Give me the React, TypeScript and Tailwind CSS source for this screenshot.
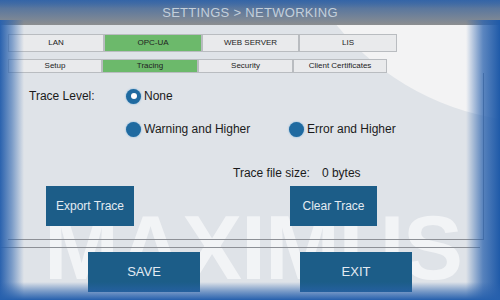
import React from "react";

const Tab = ({ label, active, w, h }: { label: string; active?: boolean; w: string; h: string }) => (
  <div
    className={`${w} ${h} flex items-center justify-center border border-[#b9bcc0] text-[8px] text-[#222] ${
      active ? "bg-[#6cb96b]" : "bg-[#e9eaec]"
    }`}
  >
    {label}
  </div>
);

const Radio = ({ checked, label }: { checked?: boolean; label: string }) => (
  <div className="flex items-center gap-[3px]">
    <div className="w-[15px] h-[15px] rounded-full bg-[#1f6aa0] flex items-center justify-center shadow-[0_0_2px_#6aa7d6]">
      {checked && <div className="w-[6px] h-[6px] rounded-full bg-white" />}
    </div>
    <span className="text-[12px] text-[#1b1b1b]">{label}</span>
  </div>
);

export default function App() {
  return (
    <div
      className="relative w-[500px] h-[300px] overflow-hidden bg-[#dfe3e8]"
      style={{ fontFamily: '"Liberation Sans", Arial, sans-serif' }}
    >
      {/* light curved area */}
      <div className="absolute left-[278px] top-[-402px] w-[524px] h-[524px] rounded-full bg-[#f3f3f4]" />

      {/* watermark */}
      <div className="absolute left-[44px] top-[203px] text-[90px] leading-none font-bold tracking-[-1px] text-white/60 select-none">
        MAXIMUS
      </div>

      <div className="relative flex flex-col h-full">
        {/* header */}
        <div className="h-[25px] flex items-center justify-center bg-gradient-to-b from-[#3f6aa3] to-[#8c8e90] text-[13px] text-[#c3cfdb] tracking-[0.3px]">
          SETTINGS &gt; NETWORKING
        </div>

        <div className="pl-[8px] pt-[9px] flex">
          <Tab label="LAN" w="w-[96px]" h="h-[18px]" />
          <Tab label="OPC-UA" active w="w-[98px]" h="h-[18px]" />
          <Tab label="WEB SERVER" w="w-[97px]" h="h-[18px]" />
          <Tab label="LIS" w="w-[98px]" h="h-[18px]" />
        </div>
        <div className="pl-[8px] pt-[7px] flex">
          <Tab label="Setup" w="w-[94px]" h="h-[14px]" />
          <Tab label="Tracing" active w="w-[96px]" h="h-[14px]" />
          <Tab label="Security" w="w-[95px]" h="h-[14px]" />
          <Tab label="Client Certificates" w="w-[94px]" h="h-[14px]" />
        </div>

        {/* content box */}
        <div className="ml-[8px] w-[476px] h-[167px] border-r border-b border-[#8d9096] relative">
          <div className="flex items-center pt-[14px]">
            <span className="ml-[21px] w-[97px] text-[12px] text-[#1b1b1b]">Trace Level:</span>
            <Radio checked label="None" />
          </div>
          <div className="flex items-center pt-[15px] pl-[118px]">
            <div className="w-[163px]">
              <Radio label="Warning and Higher" />
            </div>
            <Radio label="Error and Higher" />
          </div>
          <div className="flex pt-[26px] pl-[225px] text-[12px] text-[#1b1b1b]">
            <span>Trace file size:</span>
            <span className="ml-[12px]">0 bytes</span>
          </div>
          <div className="flex pt-[4px] pl-[38px]">
            <div className="w-[88px] h-[40px] bg-[#1c5d88] flex items-center justify-center text-[12px] text-[#e3ebf2]">
              Export Trace
            </div>
            <div className="ml-[156px] w-[87px] h-[40px] bg-[#1c5d88] flex items-center justify-center text-[12px] text-[#e3ebf2]">
              Clear Trace
            </div>
          </div>
        </div>
        <div className="h-[8px] w-[480px] border-b border-[#8d9096]" />

        <div className="flex pt-[4px] pl-[88px]">
          <div className="w-[112px] h-[40px] bg-[#1c5d88] flex items-center justify-center text-[13px] text-[#e3ebf2]">
            SAVE
          </div>
          <div className="ml-[100px] w-[112px] h-[40px] bg-[#1c5d88] flex items-center justify-center text-[13px] text-[#e3ebf2]">
            EXIT
          </div>
        </div>
      </div>

      {/* blue frame edges */}
      <div className="absolute left-0 top-[20px] bottom-0 w-[24px] bg-gradient-to-r from-[#2a62ae] via-[#2a62ae]/55 to-transparent" />
      <div className="absolute right-0 top-[20px] bottom-0 w-[34px] bg-gradient-to-l from-[#1f5aa8] via-[#2a62ae]/75 to-transparent" />
      <div className="absolute left-0 right-0 bottom-0 h-[18px] bg-gradient-to-t from-[#2660ad] via-[#2a62ae]/55 to-transparent" />
      <div className="absolute left-0 right-0 top-0 h-[8px] bg-gradient-to-b from-[#2d62aa]/60 to-transparent" />
    </div>
  );
}
